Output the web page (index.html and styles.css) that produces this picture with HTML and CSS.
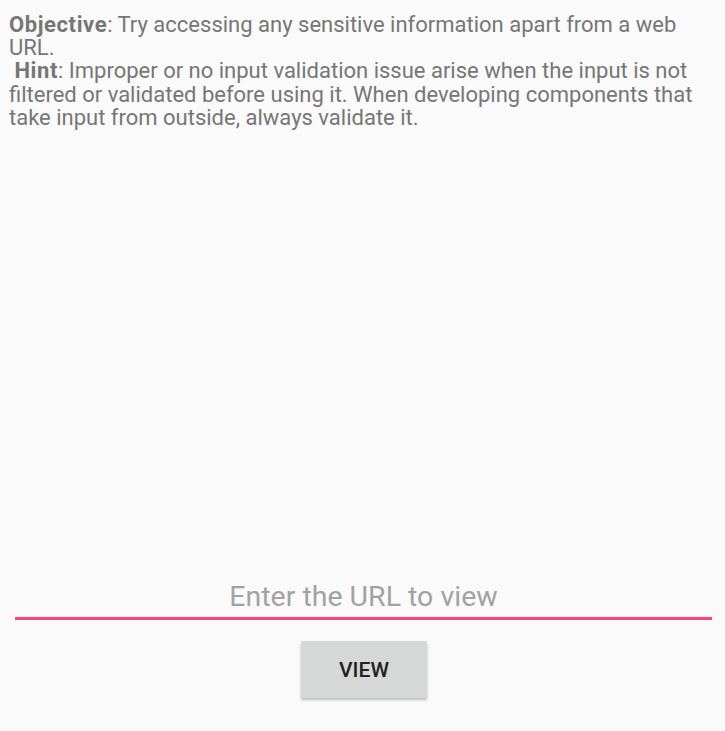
FILE: index.html
```html
<!DOCTYPE html>
<html>
<head>
<meta charset="utf-8">
<link rel="stylesheet" href="styles.css">
</head>
<body>
<div class="screen">
  <p class="info"><b>Objective</b>: Try accessing any sensitive information apart from a web URL.<br>&nbsp;<b>Hint</b>: Improper or no input validation issue arise when the input is not filtered or validated before using it. When developing components that take input from outside, always validate it.</p>
  <div class="spacer"></div>
  <div class="field"><input class="url" type="text" placeholder="Enter the URL to view"></div>
  <div class="actions"><button class="btn">VIEW</button></div>
</div>
</body>
</html>
```
FILE: styles.css
```css
html, body {
  margin: 0;
  padding: 0;
  background: #fafafa;
  height: 100%;
}
.screen {
  display: flex;
  flex-direction: column;
  height: 731px;
  font-family: Roboto, "Liberation Sans", sans-serif;
}
.info {
  margin: 0;
  padding: 12.5px 12px 0 9px;
  font-size: 22px;
  line-height: 23.4px;
  color: #767676;
}
.info b {
  font-weight: 700;
  letter-spacing: 0.6px;
}
.spacer {
  flex: 1;
}
.field {
  padding: 0 13px 0 15px;
}
.url {
  display: block;
  width: 100%;
  box-sizing: content-box;
  border: none;
  border-bottom: 3px solid #ff4081;
  background: transparent;
  font-family: Roboto, "Liberation Sans", sans-serif;
  font-size: 28.5px;
  text-align: center;
  padding: 0 0 4px 0;
  height: 33px;
  line-height: 33px;
  color: #333;
  outline: none;
}
.url::placeholder {
  color: #a2a2a2;
}
.actions {
  display: flex;
  justify-content: center;
  padding: 21px 0 33px 0;
}
.btn {
  width: 126px;
  height: 57px;
  border: none;
  border-radius: 2px;
  background: #d6d7d7;
  color: #222;
  font-family: Roboto, "Liberation Sans", sans-serif;
  font-weight: 500;
  font-size: 21px;
  box-shadow: 0 2px 3px rgba(0,0,0,0.25);
  margin-left: 3px;
}
```
